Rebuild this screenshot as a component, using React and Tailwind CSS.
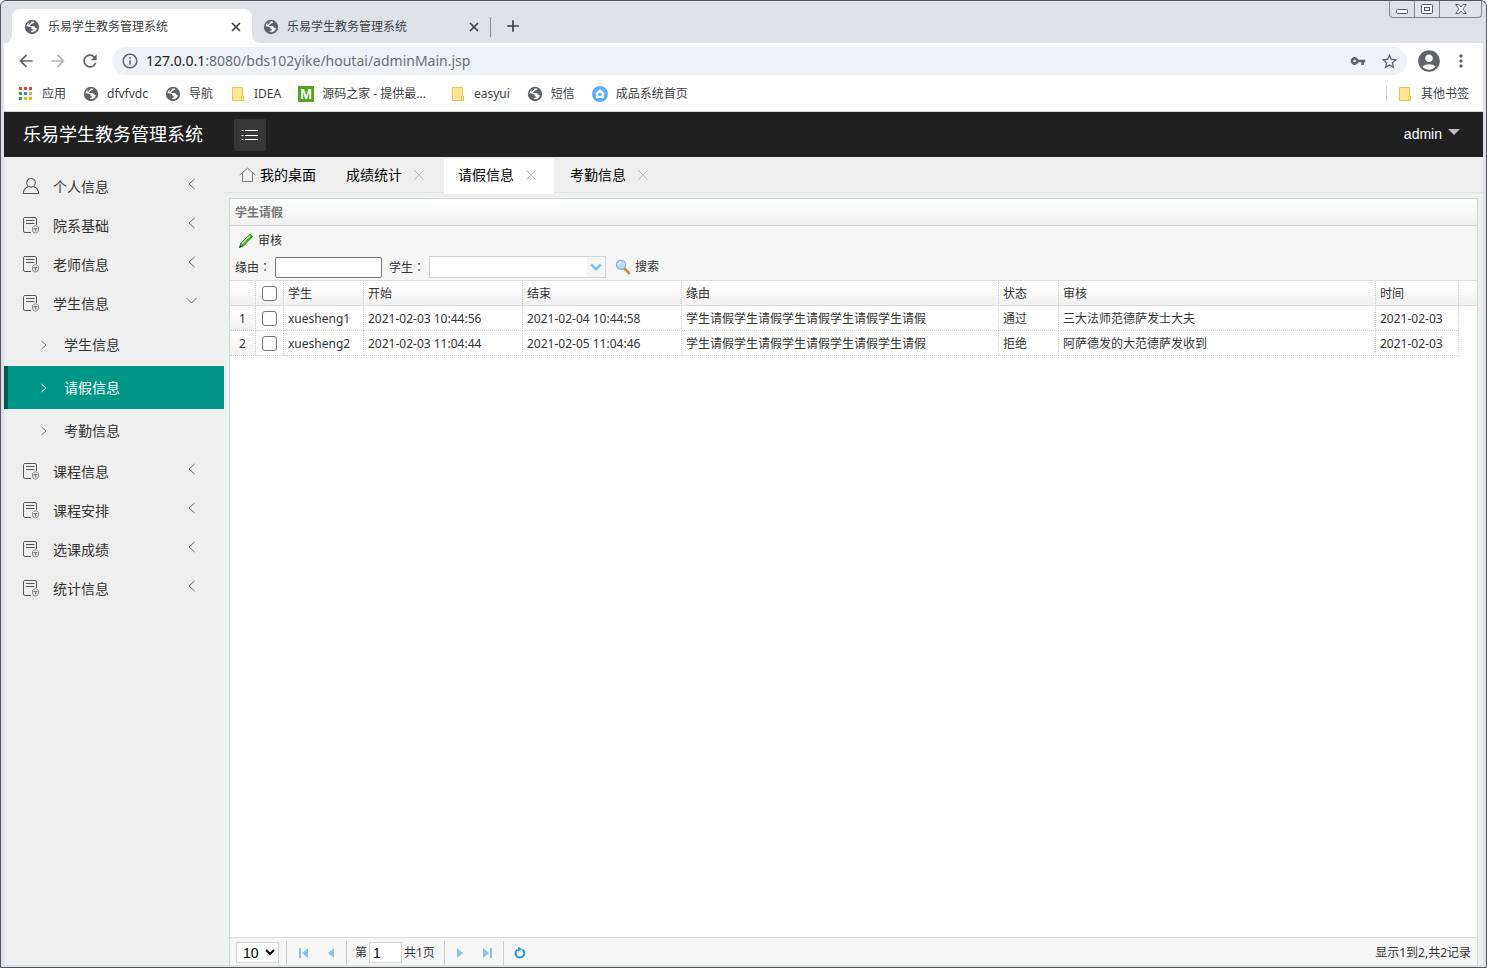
import React, { useState } from 'react';
import {
    MdArrowBack,
    MdArrowForward,
    MdRefresh,
    MdInfoOutline,
    MdVpnKey,
    MdStarBorder,
    MdAccountCircle,
    MdMoreVert,
    MdAdd
} from 'react-icons/md';

const APP_TITLE = '乐易学生教务管理系统';

const MENU = [
    { label: '个人信息', icon: 'user' },
    { label: '院系基础' },
    { label: '老师信息' },
    { label: '学生信息', children: ['学生信息', '请假信息', '考勤信息'] },
    { label: '课程信息' },
    { label: '课程安排' },
    { label: '选课成绩' },
    { label: '统计信息' }
];

const ROWS = [
    {
        student: 'xuesheng1',
        start: '2021-02-03 10:44:56',
        end: '2021-02-04 10:44:58',
        reason: '学生请假学生请假学生请假学生请假学生请假',
        status: '通过',
        review: '三大法师范德萨发士大夫',
        date: '2021-02-03'
    },
    {
        student: 'xuesheng2',
        start: '2021-02-03 11:04:44',
        end: '2021-02-05 11:04:46',
        reason: '学生请假学生请假学生请假学生请假学生请假',
        status: '拒绝',
        review: '阿萨德发的大范德萨发收到',
        date: '2021-02-03'
    }
];

const App = () => {
    const [activeSub, setActiveSub] = useState('请假信息');

    return (
        <div className="flex min-h-screen flex-col rounded-t-md border border-[#55555a] bg-[#dee2e6] px-[3px] pb-[2px] font-['Noto_Sans','Noto_Sans_CJK_SC',sans-serif] text-xs leading-4 text-[#333]">
            <TabStrip />
            <AddressBar />
            <Bookmarks />
            <Header />
            <div className="flex flex-1">
                <Sidebar activeSub={activeSub} onSelect={setActiveSub} />
                <main className="flex min-w-0 flex-1 flex-col bg-[#eef2ef]">
                    <PageTabs />
                    <LeavePanel />
                </main>
            </div>
        </div>
    );
};

/* Browser chrome */

const TabStrip = () => (
    <div className="flex h-[42px] items-end justify-between pr-px pl-2">
        <div className="flex items-end">
            <div className="relative flex h-[34px] w-[240px] items-center rounded-t-lg bg-white pt-px pr-[11px] pl-3 text-[#3c4043]">
                <Flare className="absolute bottom-0 -left-2 size-2" />
                <Flare className="absolute -right-2 bottom-0 size-2 -scale-x-100" />
                <GlobeIcon />
                <span className="ml-2 flex-1">{APP_TITLE}</span>
                <button aria-label="关闭标签页"><CloseIcon /></button>
            </div>
            <div className="flex h-[34px] w-[238px] items-center pt-px pr-[11px] pl-[11px] text-[#3c4043]">
                <GlobeIcon />
                <span className="ml-2 flex-1">{APP_TITLE}</span>
                <button aria-label="关闭标签页"><CloseIcon /></button>
            </div>
            <div className="mb-[6px] h-5 w-px bg-[#85888c]" />
            <button aria-label="新标签页" className="mb-[7px] ml-3 text-[#3c4043]"><MdAdd size={20} /></button>
        </div>
        <div className="flex h-[17px] self-start rounded-b border border-t-0 border-[#85868c] text-[#55575c]">
            <button aria-label="最小化" className="flex w-[25px] items-center justify-center border-r border-[#85868c]">
                <svg width="12" height="16" viewBox="0 0 12 16" fill="none" stroke="currentColor"><rect x="0.5" y="8.5" width="11" height="4" rx="1" fill="#fff" /></svg>
            </button>
            <button aria-label="最大化" className="flex w-[25px] items-center justify-center border-r border-[#85868c]">
                <svg width="12" height="16" viewBox="0 0 12 16" fill="none" stroke="currentColor"><rect x="0.5" y="3.5" width="11" height="9" rx="1" fill="#fff" /><rect x="3.5" y="6.5" width="5" height="3" /></svg>
            </button>
            <button aria-label="关闭" className="flex w-[41px] items-center justify-center">
                <svg width="12" height="16" viewBox="0 0 12 16" fill="#fff" stroke="currentColor" strokeWidth="0.9"><path d="M.7 3.5h3.2L6 6l2.100-2.500h3.200L7.900 8l3.400 4.500H8.100L6 10l-2.100 2.500H.7L4.100 8z" /></svg>
            </button>
        </div>
    </div>
);

const AddressBar = () => (
    <div className="flex h-9 items-center bg-white pr-3 pl-3 text-[#5f6368]">
        <button aria-label="后退"><MdArrowBack size={20} /></button>
        <button aria-label="前进" className="ml-3 text-[#b4b6ba]"><MdArrowForward size={20} /></button>
        <button aria-label="刷新" className="ml-3"><MdRefresh size={20} /></button>
        <div className="mr-[9px] ml-3 flex h-7 flex-1 items-center rounded-full bg-[#eef1f6] pr-2 pl-[9px]">
            <MdInfoOutline size={18} />
            <div className="ml-[7px] flex-1 text-[14px] leading-5 text-[#6c6f74]">
                <span className="text-[#202124]">127.0.0.1</span>:8080/bds102yike/houtai/adminMain.jsp
            </div>
            <MdVpnKey size={16} className="mr-[14px]" />
            <MdStarBorder size={19} />
        </div>
        <button aria-label="用户"><MdAccountCircle size={26} /></button>
        <button aria-label="菜单" className="ml-[9px]"><MdMoreVert size={20} /></button>
    </div>
);

const Bookmarks = () => (
    <nav className="flex h-[33px] items-center justify-between border-b border-[#d5d7da] bg-white pr-[14px] pb-[2px] pl-[14px] text-[#3c4043]">
        <div className="flex items-center gap-[17px]">
            <Bookmark icon={<AppsIcon />} label="应用" />
            <Bookmark icon={<GlobeIcon />} label="dfvfvdc" />
            <Bookmark icon={<GlobeIcon />} label="导航" />
            <Bookmark icon={<FolderIcon />} label="IDEA" />
            <Bookmark
                icon={<span className="flex size-4 items-center justify-center bg-[#4fa51d] font-['Liberation_Sans',sans-serif] text-sm font-bold text-white">M</span>}
                label="源码之家 - 提供最..."
                className="mr-[7px]"
            />
            <Bookmark icon={<FolderIcon />} label="easyui" />
            <Bookmark icon={<GlobeIcon />} label="短信" />
            <Bookmark icon={<HomeBadgeIcon />} label="成品系统首页" />
        </div>
        <div className="flex items-center">
            <div className="mr-[10px] h-4 w-px bg-[#cfd1d4]" />
            <Bookmark icon={<FolderIcon />} label="其他书签" />
        </div>
    </nav>
);

const Bookmark = ({ icon, label, className = '' }) => (
    <a href="#" className={`flex items-center gap-2 whitespace-nowrap ${className}`}>
        {icon}
        <span>{label}</span>
    </a>
);

/* Application */

const Header = () => (
    <header className="flex h-[45px] items-center bg-[#202020] pr-[23px] pl-[19px] text-white">
        <h1 className="w-[211px] pb-[2px] text-lg leading-6">{APP_TITLE}</h1>
        <button aria-label="折叠菜单" className="flex size-8 items-center justify-center rounded-xs bg-[#373737]">
            <svg width="18" height="12" viewBox="0 0 18 12" stroke="#fff" strokeWidth="1" fill="none">
                <path d="M4 1.500h13M4 6.500h13M4 10.500h13M.5 1.500h2M.5 6.500h2M.5 10.500h2" />
            </svg>
        </button>
        <button className="ml-auto flex items-center gap-[6px] pb-px font-['Liberation_Sans',sans-serif] text-sm">
            admin
            <span className="mb-1 border-x-[6px] border-t-[6px] border-x-transparent border-t-[#bcbcbc]" />
        </button>
    </header>
);

const Sidebar = ({ activeSub, onSelect }) => (
    <nav className="w-[220px] shrink-0 bg-[#eee] pt-[10px] text-sm">
        {MENU.map((item) => (
            <div key={item.label}>
                <a href="#" className="flex h-[39px] items-center pr-[27px] pl-[18px]">
                    {item.icon === 'user' ? <UserIcon /> : <FormIcon />}
                    <span className="ml-[13px] flex-1">{item.label}</span>
                    <Chevron open={!!item.children} />
                </a>
                {item.children && item.children.map((child) => (
                    <a
                        key={child}
                        href="#"
                        onClick={() => onSelect(child)}
                        className={`flex h-[43px] items-center border-l-4 pl-8 ${child === activeSub
                            ? 'border-[#00574e] bg-[#009688] text-white'
                            : 'border-transparent'
                            }`}
                    >
                        <svg width="8" height="10" viewBox="0 0 8 10" fill="none" stroke={child === activeSub ? '#fff' : '#777'}>
                            <path d="M1.500 1l4.500 4-4.500 4" />
                        </svg>
                        <span className="ml-4">{child}</span>
                    </a>
                ))}
            </div>
        ))}
    </nav>
);

const PageTabs = () => (
    <div className="flex h-9 items-center border-b border-[#e2e2e2] bg-[#eee] text-sm text-black">
        <button className="flex w-[108px] items-center gap-1 pl-[15px]">
            <svg width="17" height="16" viewBox="0 0 17 16" fill="none" stroke="#777">
                <path d="M.7 8L8.500 1.200 16.300 8M3.500 6v8.500h10V6" />
            </svg>
            我的桌面
        </button>
        <PageTab label="成绩统计" />
        <PageTab label="请假信息" active />
        <PageTab label="考勤信息" />
    </div>
);

/* Tabs hang over the strip's bottom border so the active one covers it */
const PageTab = ({ label, active }) => (
    <div className={`mr-[2px] -mb-[2px] flex h-[35px] w-[110px] items-center self-end pb-1 pl-[14px] ${active ? 'bg-white' : ''}`}>
        <span>{label}</span>
        <button aria-label={`关闭${label}`} className="ml-3">
            <svg width="10" height="10" viewBox="0 0 10 10" stroke="#bbb"><path d="M.5.5l9 9M9.500.5l-9 9" /></svg>
        </button>
    </div>
);

const LeavePanel = () => (
    <section className="mx-[5px] mt-[5px] flex flex-1 flex-col border border-b-0 border-[#d3d3d3] bg-white">
        <h2 className="flex h-[27px] items-center border-b border-[#d3d3d3] bg-linear-to-b from-white via-[#f8f8f8] to-[#f1eff1] pt-px pl-[5px] font-bold text-[#777]">
            学生请假
        </h2>
        <form className="h-[55px] border-b border-[#ddd] bg-[#f6f6f6] px-[5px] pt-px" onSubmit={(e) => e.preventDefault()}>
            <button type="button" className="flex h-7 items-center gap-1 pl-[3px]">
                <PencilIcon />
                审核
            </button>
            <div className="flex h-6 items-center">
                <FieldLabel htmlFor="reason">缘由</FieldLabel>
                <input id="reason" className="h-[21px] w-[107px] rounded-xs border border-[#767676] bg-white px-1" />
                <FieldLabel htmlFor="student" className="ml-[7px]">学生</FieldLabel>
                <div className="relative h-[22px] w-[177px] border border-[#d3d3d3] bg-white">
                    <select id="student" className="size-full appearance-none px-1">
                        <option></option>
                    </select>
                    <span className="pointer-events-none absolute inset-y-0 right-0 flex w-[18px] items-center justify-center bg-[#f5f5f5]">
                        <svg width="12" height="8" viewBox="0 0 12 8" fill="none" stroke="#6cb8ec" strokeWidth="2.200"><path d="M1.200 1.500L6 6.200l4.800-4.700" /></svg>
                    </span>
                </div>
                <button className="ml-[9px] flex items-center gap-1">
                    <SearchIcon />
                    搜索
                </button>
            </div>
        </form>
        <div className="flex-1">
            <LeaveTable />
        </div>
        <Pager />
    </section>
);

const FieldLabel = ({ htmlFor, className = '', children }) => (
    <label htmlFor={htmlFor} className={`w-10 ${className}`}>
        {children}
        <span className="font-['Noto_Sans_CJK_TC',sans-serif]">：</span>
    </label>
);

const HEAD = 'h-[25px] border-r border-b border-r-[#ccc] border-b-[#ddd] [border-right-style:dotted] px-1 pt-px text-left font-normal';
const CELL = 'h-[25px] border-r border-b border-dotted border-[#ccc] px-1 pt-px whitespace-nowrap';

const LeaveTable = () => (
    <table className="w-full table-fixed border-separate border-spacing-0">
        <colgroup>
            <col className="w-[26px]" />
            <col className="w-[28px]" />
            <col className="w-[80px]" />
            <col className="w-[159px]" />
            <col className="w-[159px]" />
            <col className="w-[317px]" />
            <col className="w-[60px]" />
            <col className="w-[317px]" />
            <col className="w-[83px]" />
            <col />
        </colgroup>
        <thead>
            <tr className="bg-linear-to-b from-white via-[#f8f8f8] to-[#f1eff1]">
                <th className={HEAD}></th>
                <th className={HEAD}><Check label="全选" /></th>
                <th className={HEAD}>学生</th>
                <th className={HEAD}>开始</th>
                <th className={HEAD}>结束</th>
                <th className={HEAD}>缘由</th>
                <th className={HEAD}>状态</th>
                <th className={HEAD}>审核</th>
                <th className={HEAD}>时间</th>
                <th className="border-b border-[#ddd]"></th>
            </tr>
        </thead>
        <tbody>
            {ROWS.map((row, index) => (
                <tr key={row.student}>
                    <td className={`${CELL} bg-linear-to-b from-white to-[#f3f2f3] text-center`}>{index + 1}</td>
                    <td className={CELL}><Check label={row.student} /></td>
                    <td className={CELL}>{row.student}</td>
                    <td className={CELL}>{row.start}</td>
                    <td className={CELL}>{row.end}</td>
                    <td className={CELL}>{row.reason}</td>
                    <td className={CELL}>{row.status}</td>
                    <td className={CELL}>{row.review}</td>
                    <td className={CELL}>{row.date}</td>
                    <td></td>
                </tr>
            ))}
        </tbody>
    </table>
);

const Check = ({ label }) => (
    <input
        type="checkbox"
        aria-label={label}
        className="mx-auto block size-[15px] appearance-none rounded-[3px] border border-[#767676] bg-white checked:bg-[#009688]"
    />
);

const Pager = () => (
    <div className="flex h-7 items-center border-t border-[#ddd] bg-[#f6f6f6] pt-[2px] pr-[6px] pl-[6px]">
        <select aria-label="每页条数" className="h-[21px] w-[43px] border border-[#d3d3d3] bg-white pl-[2px] font-['Liberation_Sans',sans-serif] text-sm text-black">
            <option>10</option>
        </select>
        <PagerLine className="ml-[7px]" />
        <PagerButton label="第一页" className="ml-2"><path d="M4 3h2v10H4zM13 3v10L7 8z" /></PagerButton>
        <PagerButton label="上一页" className="ml-3"><path d="M11 3v10L5 8z" /></PagerButton>
        <PagerLine className="ml-[7px]" />
        <label htmlFor="page" className="ml-2 w-[14px]">第</label>
        <input id="page" defaultValue="1" className="h-[21px] w-[33px] border border-[#d3d3d3] bg-white px-[3px] font-['Liberation_Sans',sans-serif] text-sm text-black" />
        <span className="ml-[2px] w-10">共1页</span>
        <PagerLine />
        <PagerButton label="下一页" className="ml-[7px]"><path d="M5 3v10l6-5z" /></PagerButton>
        <PagerButton label="最后一页" className="ml-3"><path d="M3 3v10l6-5zM10 3h2v10h-2z" /></PagerButton>
        <PagerLine className="ml-[7px]" />
        <button aria-label="刷新" className="ml-2">
            <svg width="16" height="16" viewBox="0 0 16 16" fill="none" stroke="#2f95d9" strokeWidth="2">
                <path d="M10.500 4.600A4.400 4.400 0 1 1 5.600 4.500" />
                <path d="M6 1.800v5L10.200 4.200z" fill="#2f95d9" stroke="none" />
            </svg>
        </button>
        <span className="ml-auto">显示1到2,共2记录</span>
    </div>
);

const PagerLine = ({ className = '' }) => (
    <div className={`h-6 w-px shrink-0 bg-[#ccc] ${className}`} />
);

const PagerButton = ({ label, className, children }) => (
    <button aria-label={label} className={className}>
        <svg width="16" height="16" viewBox="0 0 16 16" fill="#85c3ef">{children}</svg>
    </button>
);

/* Icons */

const Flare = ({ className }) => (
    <svg viewBox="0 0 8 8" className={className} fill="#fff"><path d="M8 0v8H0a8 8 0 0 0 8-8z" /></svg>
);

const CloseIcon = () => (
    <svg width="10" height="10" viewBox="0 0 10 10" stroke="#3c4043" strokeWidth="1.700">
        <path d="M1 1l8 8M9 1L1 9" />
    </svg>
);

const GlobeIcon = () => (
    <svg width="16" height="16" viewBox="0 0 16 16" className="shrink-0">
        <circle cx="8" cy="8" r="7.200" fill="#5f6368" />
        <path d="M10.300 2.800c-.2 1.300-.9 1.700-2.100 1.700-.9 0-.8 1.100-1.700 1.300-.8.200-.6 1.200.3 1.200h2.600c1.200.1 1.100 1.500 2 1.700.6.100 1.200.3 1.500.8-.5 1.900-1.900 3.200-4 3.600-.9.100-1.500-.1-2-.6.300-.7 1-.8 1.800-.9.600-.2.500-1.200-.2-1.400-1.300-.2-1.200-1.500-2-2.100C5.700 7.400 4 7.700 2.500 7.200c.3-1.700 1.500-3.300 3.200-4.100 1.400-.6 3-.8 4.600-.3z" fill="#fff" />
        <path d="M4.600 3.400C5.700 2.700 7 2.700 7.300 3.300c.1.700-1 .6-1.300 1.400-.3.700-.9.900-1.700 1.100z" fill="#5f6368" />
    </svg>
);

const AppsIcon = () => (
    <svg width="16" height="16" viewBox="0 0 16 16" className="shrink-0">
        <path d="M1 1h3v3H1zM6 1h3v3H6zM11 1h3v3h-3z" fill="#ea4335" />
        <path d="M1 6h3v3H1zM1 11h3v3H1z" fill="#34a153" />
        <path d="M6 6h3v3H6z" fill="#2684fc" />
        <path d="M11 6h3v3h-3zM6 11h3v3H6zM11 11h3v3h-3z" fill="#f9ab00" />
    </svg>
);

const FolderIcon = () => (
    <svg width="16" height="16" viewBox="0 0 16 16" className="shrink-0" fill="#ffe594" stroke="#efc14e">
        <path d="M2.500 1.500h10v9h1v4h-11z" />
        <path d="M11.500 14v-3.500h2v4z" fill="#fff0bd" />
    </svg>
);

const HomeBadgeIcon = () => (
    <svg width="16" height="16" viewBox="0 0 16 16" className="shrink-0">
        <circle cx="8" cy="8" r="8" fill="#5bb0f8" />
        <path d="M8 3l5 4.500h-1.200V12H4.200V7.500H3z" fill="#fff" />
        <circle cx="8" cy="8.500" r="1.800" fill="#5bb0f8" />
    </svg>
);

const UserIcon = () => (
    <svg width="18" height="18" viewBox="0 0 18 18" fill="none" stroke="#555" strokeWidth="1.100" className="mb-[2px] shrink-0">
        <circle cx="9" cy="5.800" r="4.300" />
        <path d="M6.500 9.500C3.500 10.500 1.500 13 1.300 16.500h15.400c-.2-3.500-2.200-6-5.200-7" />
    </svg>
);

const FormIcon = () => (
    <svg width="18" height="18" viewBox="0 0 18 18" fill="none" stroke="#555" className="mb-[2px] shrink-0">
        <path d="M9 16.500H3A1.500 1.500 0 0 1 1.500 15V2.500A1.500 1.500 0 0 1 3 1.500h10a1.500 1.500 0 0 1 1.500 1.500V9" />
        <path d="M4 4.500h8.500M4 7.500h8.500" />
        <path d="M10.500 11.500a3.500 3.500 0 0 1 6 0v2.500a3 3 0 0 1-6 0z" stroke="#888" />
        <path d="M11.500 12.500h4M13.500 12.500v3M12.500 14h2" stroke="#777" />
    </svg>
);

const Chevron = ({ open }) => (
    <svg width="11" height="12" viewBox="0 0 11 12" fill="none" stroke="#666" className="mb-[5px]">
        <path d={open ? 'M.5 3l5 5 5-5' : 'M8.500 1L3 6l5.500 5'} />
    </svg>
);

const PencilIcon = () => (
    <svg width="16" height="16" viewBox="0 0 16 16">
        <path d="M1.500 14.500l1.300-4.200L11.500 1.800c1-.9 3.400 1 2.500 2.300L5.500 13z" fill="#4cb52c" stroke="#1c7a14" strokeWidth="0.900" />
        <path d="M4 10.500l8-7.700" stroke="#b4ee8e" strokeWidth="1.300" />
        <path d="M1.300 14.700l.9-2.700 1.800 1.700z" fill="#333" />
    </svg>
);

const SearchIcon = () => (
    <svg width="16" height="16" viewBox="0 0 16 16">
        <path d="M9.500 9.500l4.500 4.500" stroke="#d8862f" strokeWidth="2.600" strokeLinecap="round" />
        <path d="M8.800 8.800l1.700 1.700" stroke="#999" strokeWidth="1.600" />
        <circle cx="6" cy="5.800" r="4.600" fill="#b7dcfb" stroke="#8fa9d6" strokeWidth="1.200" />
        <path d="M3.500 5.300c.3-1.500 1.500-2.200 2.900-2.100" stroke="#fff" strokeWidth="1.200" fill="none" />
    </svg>
);

export default App;
